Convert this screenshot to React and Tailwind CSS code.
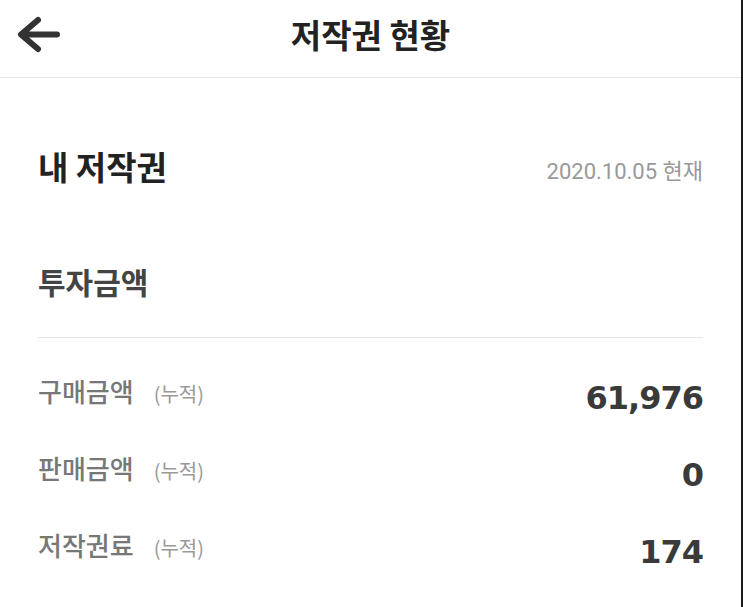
import React from 'react';

const rows = [
  { label: '구매금액', value: '61,976' },
  { label: '판매금액', value: '0' },
  { label: '저작권료', value: '174' },
];

const BackArrow = () => (
  <svg width="48" height="44" viewBox="0 0 48 44" fill="none">
    <path
      d="M24 7 L7 21.5 L24 36 M8 21.5 H43"
      stroke="#333"
      strokeWidth="6"
      strokeLinecap="round"
      strokeLinejoin="round"
    />
  </svg>
);

export default function App() {
  return (
    <div className="w-[743px] h-[607px] bg-white border-r-2 border-[#1a1a1a] font-['Noto_Sans_CJK_KR',sans-serif] overflow-hidden">
      {/* Header */}
      <header className="h-[78px] grid grid-cols-[1fr_auto_1fr] items-center border-b border-[#e6e6e6]">
        <button className="pl-[14px] pb-[8px] flex items-center">
          <BackArrow />
        </button>
        <h1 className="text-[33px] font-bold text-[#222] leading-[44px] pb-[10px]">저작권 현황</h1>
        <div />
      </header>

      <main className="px-[38px]">
        {/* My copyright */}
        <section className="h-[176px] flex items-center justify-between">
          <h2 className="text-[33px] font-bold text-[#222] leading-[44px]">내 저작권</h2>
          <span className="text-[22px] text-[#999] font-['Roboto','Noto_Sans_CJK_KR',sans-serif] pt-[10px]">
            2020.10.05 현재
          </span>
        </section>

        {/* Investment */}
        <section className="h-[84px] pt-[7px] border-b border-[#e6e6e6]">
          <h3 className="text-[30px] font-bold text-[#444] leading-[40px]">투자금액</h3>
        </section>

        <ul className="pt-[16px]">
          {rows.map((r) => (
            <li key={r.label} className="h-[77px] flex items-center justify-between">
              <div className="flex items-baseline gap-[20px] pb-[5px]">
                <span className="text-[26px] font-medium text-[#777]">{r.label}</span>
                <span className="text-[20px] text-[#999]">(누적)</span>
              </div>
              <span className="text-[32px] font-bold text-[#3a3a3a] font-['DejaVu_Sans',sans-serif] pt-[10px] tracking-[-1px]">
                {r.value}
              </span>
            </li>
          ))}
        </ul>
      </main>
    </div>
  );
}
